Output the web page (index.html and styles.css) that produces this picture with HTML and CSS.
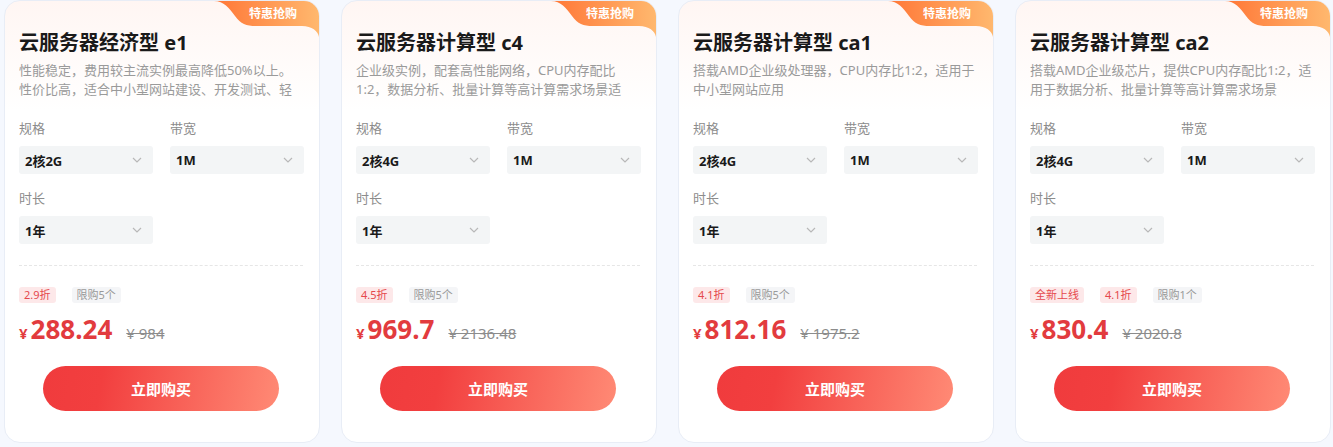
FILE: index.html
```html
<!DOCTYPE html>
<html>
<head>
  <meta charset="utf-8">
  <title>云服务器特惠</title>
  <link rel="stylesheet" href="styles.css">
</head>
<body>

  <div class="cards">

    <div class="card">
      <div class="ribbon">
        <svg viewBox="0 0 105 36" width="105" height="36">
          <defs>
            <linearGradient id="rb1" x1="0" y1="0" x2="1" y2="0">
              <stop offset="0" stop-color="#ff7636"/>
              <stop offset="1" stop-color="#ffb86e"/>
            </linearGradient>
          </defs>
          <path d="M0,0 C10,0 15,7 21,15 C27,23 32,25 42,25 L88,25 C98,25 104,30 105,36 L105,0 Z" fill="url(#rb1)"/>
        </svg>
        <span>特惠抢购</span>
      </div>
      <h2 class="title">云服务器经济型 e1</h2>
      <p class="desc">性能稳定，费用较主流实例最高降低50%以上。性价比高，适合中小型网站建设、开发测试、轻量级应用等场景</p>
      <div class="specs">
        <div class="field">
          <div class="label">规格</div>
          <div class="select">2核2G<svg class="chev" viewBox="0 0 10 6" width="10" height="6"><polyline points="1,1 5,5 9,1"/></svg></div>
        </div>
        <div class="field">
          <div class="label">带宽</div>
          <div class="select">1M<svg class="chev" viewBox="0 0 10 6" width="10" height="6"><polyline points="1,1 5,5 9,1"/></svg></div>
        </div>
        <div class="field">
          <div class="label">时长</div>
          <div class="select">1年<svg class="chev" viewBox="0 0 10 6" width="10" height="6"><polyline points="1,1 5,5 9,1"/></svg></div>
        </div>
      </div>
      <div class="divider"></div>
      <div class="tags">
        <span class="tag red">2.9折</span>
        <span class="tag gray">限购5个</span>
      </div>
      <div class="price">
        <span class="cur">¥</span><span class="num">288.24</span><span class="old">¥ 984</span>
      </div>
      <button class="buy">立即购买</button>
    </div>

    <div class="card">
      <div class="ribbon">
        <svg viewBox="0 0 105 36" width="105" height="36">
          <defs>
            <linearGradient id="rb2" x1="0" y1="0" x2="1" y2="0">
              <stop offset="0" stop-color="#ff7636"/>
              <stop offset="1" stop-color="#ffb86e"/>
            </linearGradient>
          </defs>
          <path d="M0,0 C10,0 15,7 21,15 C27,23 32,25 42,25 L88,25 C98,25 104,30 105,36 L105,0 Z" fill="url(#rb2)"/>
        </svg>
        <span>特惠抢购</span>
      </div>
      <h2 class="title">云服务器计算型 c4</h2>
      <p class="desc">企业级实例，配套高性能网络，CPU内存配比1:2，数据分析、批量计算等高计算需求场景适用，满足企业级应用需求</p>
      <div class="specs">
        <div class="field">
          <div class="label">规格</div>
          <div class="select">2核4G<svg class="chev" viewBox="0 0 10 6" width="10" height="6"><polyline points="1,1 5,5 9,1"/></svg></div>
        </div>
        <div class="field">
          <div class="label">带宽</div>
          <div class="select">1M<svg class="chev" viewBox="0 0 10 6" width="10" height="6"><polyline points="1,1 5,5 9,1"/></svg></div>
        </div>
        <div class="field">
          <div class="label">时长</div>
          <div class="select">1年<svg class="chev" viewBox="0 0 10 6" width="10" height="6"><polyline points="1,1 5,5 9,1"/></svg></div>
        </div>
      </div>
      <div class="divider"></div>
      <div class="tags">
        <span class="tag red">4.5折</span>
        <span class="tag gray">限购5个</span>
      </div>
      <div class="price">
        <span class="cur">¥</span><span class="num">969.7</span><span class="old">¥ 2136.48</span>
      </div>
      <button class="buy">立即购买</button>
    </div>

    <div class="card">
      <div class="ribbon">
        <svg viewBox="0 0 105 36" width="105" height="36">
          <defs>
            <linearGradient id="rb3" x1="0" y1="0" x2="1" y2="0">
              <stop offset="0" stop-color="#ff7636"/>
              <stop offset="1" stop-color="#ffb86e"/>
            </linearGradient>
          </defs>
          <path d="M0,0 C10,0 15,7 21,15 C27,23 32,25 42,25 L88,25 C98,25 104,30 105,36 L105,0 Z" fill="url(#rb3)"/>
        </svg>
        <span>特惠抢购</span>
      </div>
      <h2 class="title">云服务器计算型 ca1</h2>
      <p class="desc">搭载AMD企业级处理器，CPU内存比1:2，适用于中小型网站应用</p>
      <div class="specs">
        <div class="field">
          <div class="label">规格</div>
          <div class="select">2核4G<svg class="chev" viewBox="0 0 10 6" width="10" height="6"><polyline points="1,1 5,5 9,1"/></svg></div>
        </div>
        <div class="field">
          <div class="label">带宽</div>
          <div class="select">1M<svg class="chev" viewBox="0 0 10 6" width="10" height="6"><polyline points="1,1 5,5 9,1"/></svg></div>
        </div>
        <div class="field">
          <div class="label">时长</div>
          <div class="select">1年<svg class="chev" viewBox="0 0 10 6" width="10" height="6"><polyline points="1,1 5,5 9,1"/></svg></div>
        </div>
      </div>
      <div class="divider"></div>
      <div class="tags">
        <span class="tag red">4.1折</span>
        <span class="tag gray">限购5个</span>
      </div>
      <div class="price">
        <span class="cur">¥</span><span class="num">812.16</span><span class="old">¥ 1975.2</span>
      </div>
      <button class="buy">立即购买</button>
    </div>

    <div class="card">
      <div class="ribbon">
        <svg viewBox="0 0 105 36" width="105" height="36">
          <defs>
            <linearGradient id="rb4" x1="0" y1="0" x2="1" y2="0">
              <stop offset="0" stop-color="#ff7636"/>
              <stop offset="1" stop-color="#ffb86e"/>
            </linearGradient>
          </defs>
          <path d="M0,0 C10,0 15,7 21,15 C27,23 32,25 42,25 L88,25 C98,25 104,30 105,36 L105,0 Z" fill="url(#rb4)"/>
        </svg>
        <span>特惠抢购</span>
      </div>
      <h2 class="title">云服务器计算型 ca2</h2>
      <p class="desc">搭载AMD企业级芯片，提供CPU内存配比1:2，适用于数据分析、批量计算等高计算需求场景</p>
      <div class="specs">
        <div class="field">
          <div class="label">规格</div>
          <div class="select">2核4G<svg class="chev" viewBox="0 0 10 6" width="10" height="6"><polyline points="1,1 5,5 9,1"/></svg></div>
        </div>
        <div class="field">
          <div class="label">带宽</div>
          <div class="select">1M<svg class="chev" viewBox="0 0 10 6" width="10" height="6"><polyline points="1,1 5,5 9,1"/></svg></div>
        </div>
        <div class="field">
          <div class="label">时长</div>
          <div class="select">1年<svg class="chev" viewBox="0 0 10 6" width="10" height="6"><polyline points="1,1 5,5 9,1"/></svg></div>
        </div>
      </div>
      <div class="divider"></div>
      <div class="tags">
        <span class="tag red">全新上线</span>
        <span class="tag red">4.1折</span>
        <span class="tag gray">限购1个</span>
      </div>
      <div class="price">
        <span class="cur">¥</span><span class="num">830.4</span><span class="old">¥ 2020.8</span>
      </div>
      <button class="buy">立即购买</button>
    </div>

  </div>

</body>
</html>
```

FILE: styles.css
```css
body {
  margin: 0;
  background-color: #f5f8fe;
  font-family: "Noto Sans", "Noto Sans CJK SC", sans-serif;
  color: #1f1f1f;
  overflow: hidden;
}

.cards {
  display: flex;
  gap: 21px;
  padding: 0 4px;
}

.card {
  position: relative;
  width: 316px;
  height: 443px;
  box-sizing: border-box;
  padding: 28px 16px 0 14px;
  background: linear-gradient(180deg, #fff6f3 0, #ffffff 110px);
  border: 1px solid #e8edf6;
  border-radius: 16px;
  overflow: hidden;
  flex-shrink: 0;
}

.ribbon {
  position: absolute;
  top: 0;
  right: 0;
  width: 105px;
  height: 36px;
}

.ribbon svg {
  display: block;
}

.ribbon span {
  position: absolute;
  top: 5px;
  right: 21px;
  width: 50px;
  text-align: center;
  font-size: 12px;
  line-height: 16px;
  font-weight: 700;
  color: #fff;
}

.title {
  margin: 0;
  font-size: 20px;
  line-height: 28px;
  font-weight: 700;
  color: #1a1a1a;
}

.desc {
  margin: 4px 0 0;
  font-size: 13px;
  line-height: 19px;
  height: 38px;
  overflow: hidden;
  color: #9a9a9a;
}

.specs {
  display: grid;
  grid-template-columns: 134px 134px;
  column-gap: 17px;
  row-gap: 15px;
  margin-top: 20px;
}

.label {
  font-size: 13px;
  line-height: 18px;
  color: #8c8c8c;
}

.select {
  display: flex;
  align-items: center;
  justify-content: space-between;
  height: 28px;
  margin-top: 9px;
  padding: 0 11px 0 6px;
  background-color: #f3f5f6;
  border-radius: 3px;
  font-size: 13px;
  font-weight: 700;
  color: #1a1a1a;
}

.chev polyline {
  fill: none;
  stroke: #b8b8b8;
  stroke-width: 1.2;
}

.divider {
  margin-top: 21px;
  border-top: 1px dashed #e6e6e6;
}

.tags {
  display: flex;
  gap: 16px;
  margin-top: 21px;
}

.tag {
  padding: 0 5px;
  height: 16px;
  font-size: 11px;
  line-height: 16px;
  border-radius: 3px;
}

.tag.red {
  background-color: #fde8e9;
  color: #e5484d;
}

.tag.gray {
  background-color: #f4f5f7;
  color: #9a9a9a;
}

.price {
  display: flex;
  align-items: baseline;
  margin-top: 10px;
  height: 32px;
}

.price .cur {
  font-size: 15px;
  font-weight: 700;
  color: #e23b3e;
}

.price .num {
  margin-left: 3px;
  font-size: 26px;
  line-height: 32px;
  font-weight: 700;
  color: #e23b3e;
}

.price .old {
  margin-left: 14px;
  font-size: 15px;
  color: #8c8c8c;
  text-decoration: line-through;
}

.buy {
  display: block;
  width: 236px;
  height: 45px;
  margin: 21px auto 0;
  border: none;
  border-radius: 23px;
  background: linear-gradient(100deg, #f03b3d 0, #f23f3f 25%, #ff8a75 100%);
  color: #fff;
  font-family: inherit;
  font-size: 15px;
  font-weight: 700;
  cursor: pointer;
}
```
